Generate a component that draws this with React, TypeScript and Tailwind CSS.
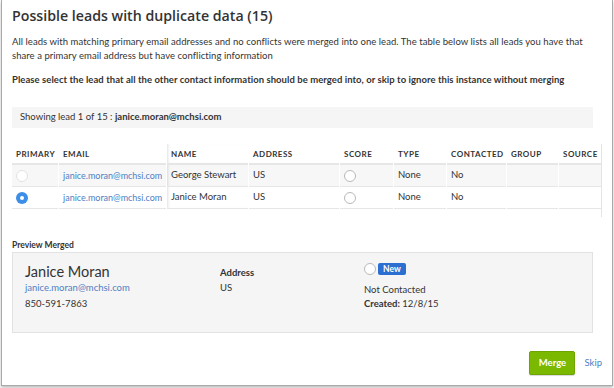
const cols = [
  { label: "PRIMARY", w: "w-[46px]" },
  { label: "EMAIL", w: "w-[107px]" },
  { label: "NAME", w: "w-[81px]" },
  { label: "ADDRESS", w: "w-[90px]" },
  { label: "SCORE", w: "w-[53px]" },
  { label: "TYPE", w: "w-[52px]" },
  { label: "CONTACTED", w: "w-[59px]" },
  { label: "GROUP", w: "w-[51px]" },
  { label: "SOURCE", w: "w-[42px]" },
];

const leads = [
  { email: "janice.moran@mchsi.com", name: "George Stewart", address: "US", type: "None", contacted: "No", selected: false },
  { email: "janice.moran@mchsi.com", name: "Janice Moran", address: "US", type: "None", contacted: "No", selected: true },
];

function Radio({ checked }: { checked: boolean }) {
  if (checked) {
    return (
      <span className="flex w-[12px] h-[12px] rounded-full bg-[#3d8ee6] items-center justify-center">
        <span className="w-[4px] h-[4px] rounded-full bg-white" />
      </span>
    );
  }
  return <span className="block w-[12px] h-[12px] rounded-full bg-white border border-[#e2e2e2]" />;
}

export default function App() {
  return (
    <div className="w-[614px] h-[388px] bg-white text-[#333] font-['Lato',sans-serif]">
      <div className="ml-[1px] w-[612px] h-[386px] bg-white border-x border-b border-[#a9a9a9] shadow-[0_2px_3px_rgba(0,0,0,0.25)] flex flex-col px-[10px]">
        <h1 className="mt-[6px] text-[14.2px] leading-[20px] font-semibold font-['Open_Sans',sans-serif]">Possible leads with duplicate data (15)</h1>

        <p className="mt-[9px] text-[9.5px] leading-[14px] tracking-[0.05px]">
          All leads with matching primary email addresses and no conflicts were merged into one lead. The table below lists all leads you have that share a primary email address but have conflicting information
        </p>
        <p className="mt-[10px] text-[9.5px] leading-[14px] font-bold tracking-[0.05px]">
          Please select the lead that all the other contact information should be merged into, or skip to ignore this instance without merging
        </p>

        <div className="mt-[20px] mr-[9px] h-[21px] bg-[#f5f5f5] flex items-center px-[8px] text-[9.5px]">
          Showing lead 1 of 15 :&nbsp;<span className="font-bold">janice.moran@mchsi.com</span>
        </div>

        <div className="mt-[16px] w-[590px] border-r border-[#e4e4e4] pb-[8px]">
          <table className="w-[591px] table-fixed border-separate border-spacing-x-[1px] border-spacing-y-0 -ml-[1px] text-[9.5px]">
            <thead>
              <tr>
                {cols.map((c, i) => (
                  <th
                    key={c.label}
                    className={`${c.w} h-[21px] pl-[4px] pr-[2px] text-left font-bold text-[8px] tracking-[0.5px] whitespace-nowrap border-b-2 border-[#e6e6e6] ${i === 2 ? "shadow-[inset_3px_0_3px_-2px_rgba(0,0,0,0.12)]" : ""}`}
                  >
                    {c.label}
                  </th>
                ))}
              </tr>
            </thead>
            <tbody>
              {leads.map((l, r) => (
                <tr key={r} className={r === 0 ? "bg-[#f7f7f7]" : "bg-white"}>
                  <td className="h-[22px] px-[4px] border-b border-[#e6e6e6]">
                    <Radio checked={l.selected} />
                  </td>
                  <td className="px-[4px] border-b border-[#e6e6e6] text-[9px] text-[#4f80c4] whitespace-nowrap">{l.email}</td>
                  <td className="px-[4px] border-b border-[#e6e6e6] whitespace-nowrap shadow-[inset_3px_0_3px_-2px_rgba(0,0,0,0.12)]">{l.name}</td>
                  <td className="px-[4px] border-b border-[#e6e6e6]">{l.address}</td>
                  <td className="px-[4px] border-b border-[#e6e6e6]">
                    <span className="block w-[12px] h-[12px] rounded-full bg-white border border-[#b9b9b9]" />
                  </td>
                  <td className="px-[4px] border-b border-[#e6e6e6]">{l.type}</td>
                  <td className="px-[4px] border-b border-[#e6e6e6]">{l.contacted}</td>
                  <td className="px-[4px] border-b border-[#e6e6e6]" />
                  <td className="px-[4px] border-b border-[#e6e6e6]" />
                </tr>
              ))}
            </tbody>
          </table>
        </div>

        <div className="mt-[22px] text-[8.5px] font-bold leading-[12px]">Preview Merged</div>

        <div className="mt-[1px] mr-[9px] h-[81px] bg-[#f5f5f5] border border-[#e2e2e2] flex pt-[10px]">
          <div className="w-[207px] pl-[12px]">
            <div className="text-[14.5px] leading-[18px]">Janice Moran</div>
            <div className="text-[9.5px] leading-[13px] text-[#4f80c4]">janice.moran@mchsi.com</div>
            <div className="mt-[3px] text-[9.5px] leading-[13px]">850-591-7863</div>
          </div>
          <div className="w-[144px] pt-[3px] text-[9.5px] leading-[13px]">
            <div className="font-bold">Address</div>
            <div className="mt-[2px]">US</div>
          </div>
          <div className="text-[9.5px] leading-[13px]">
            <div className="flex items-center gap-[2px]">
              <span className="block w-[12px] h-[12px] rounded-full bg-white border border-[#b9b9b9]" />
              <span className="h-[12px] px-[5px] rounded-[2px] bg-[#2b6fd0] text-white text-[8.5px] leading-[12px] font-bold">New</span>
            </div>
            <div className="mt-[8px]">Not Contacted</div>
            <div className="mt-[1px]"><span className="font-bold">Created:</span> 12/8/15</div>
          </div>
        </div>

        <div className="mt-[18px] flex items-center justify-end gap-[9px]">
          <button className="w-[46px] h-[24px] rounded-[2px] bg-[#7bb800] border border-[#6ea400] text-white text-[9.5px] font-bold shadow-[0_1px_1px_rgba(0,0,0,0.15)]">
            Merge
          </button>
          <span className="text-[9.5px] text-[#4f80c4]">Skip</span>
        </div>
      </div>
    </div>
  );
}
